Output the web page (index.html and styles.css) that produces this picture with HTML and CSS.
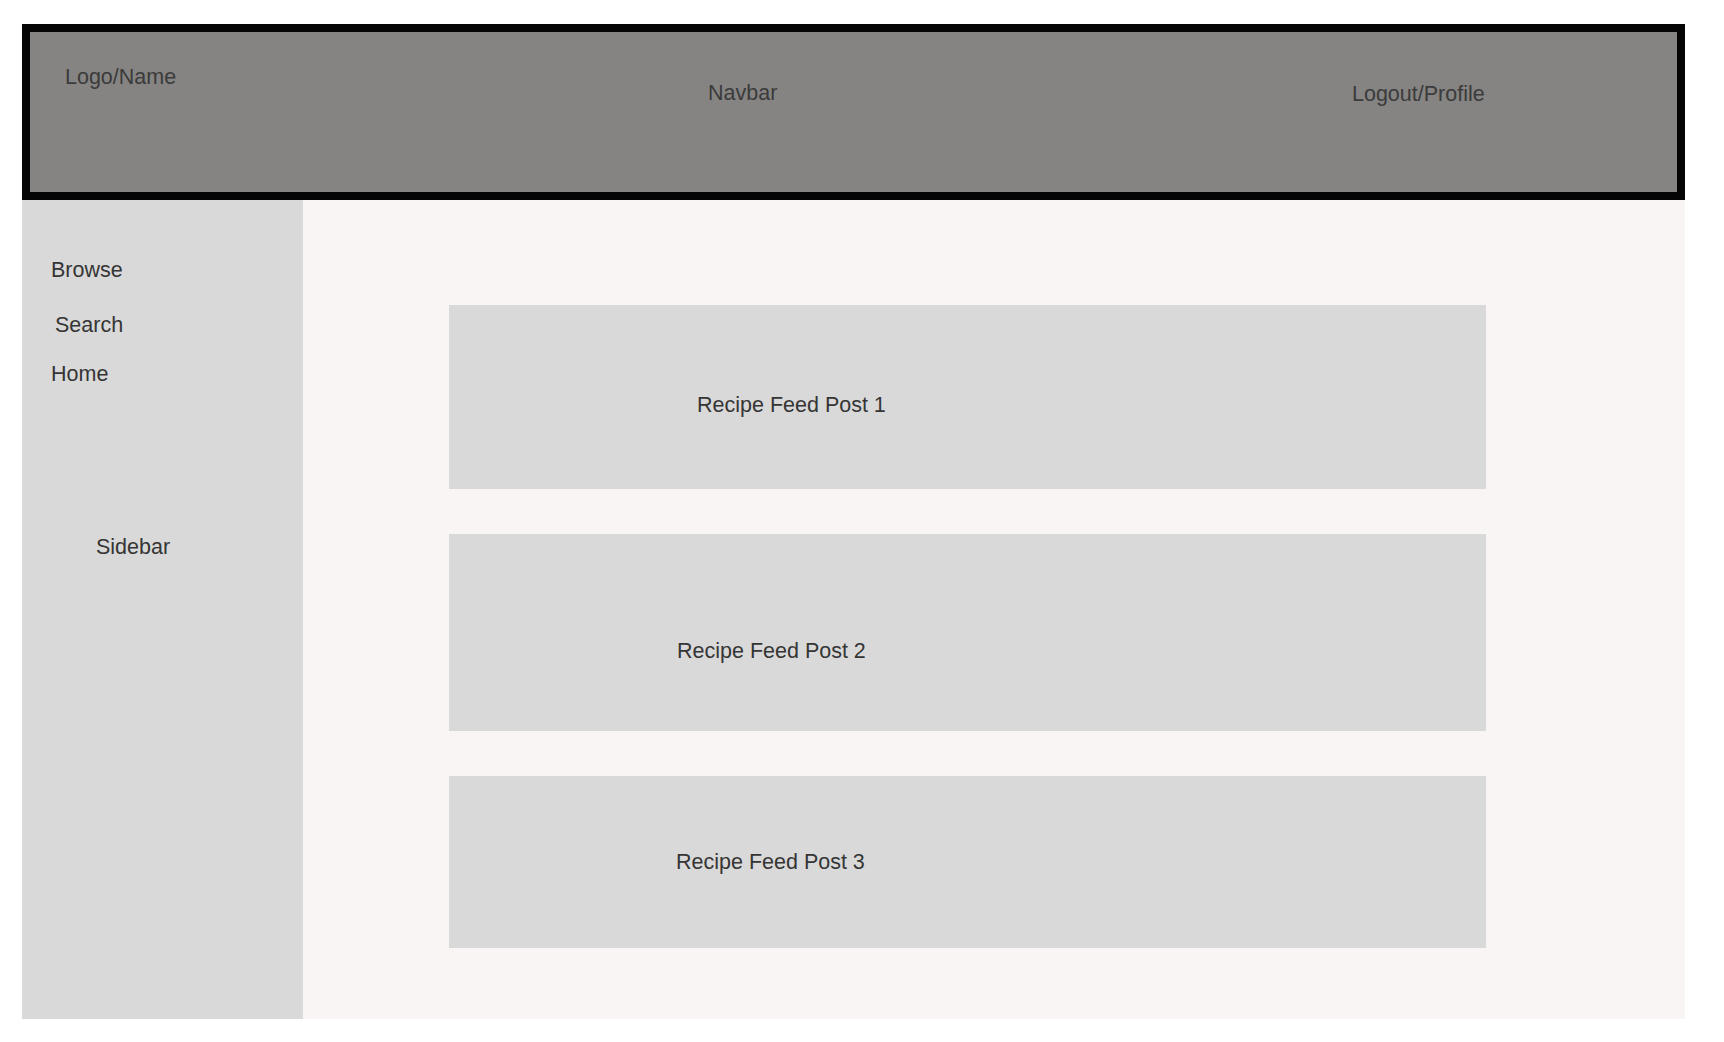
FILE: index.html
```html
<!DOCTYPE html>
<html lang="en">
<head>
<meta charset="utf-8">
<title>Recipe Feed Wireframe</title>
<link rel="stylesheet" href="styles.css">
</head>
<body>
<div class="page">
  <header class="header">
    <div class="logo">Logo/Name</div>
    <div class="navbar">Navbar</div>
    <div class="profile">Logout/Profile</div>
  </header>
  <div class="body">
    <aside class="sidebar">
      <div class="nav-item browse">Browse</div>
      <div class="nav-item search">Search</div>
      <div class="nav-item home">Home</div>
      <div class="nav-item side-label">Sidebar</div>
    </aside>
    <main class="main">
      <div class="post post-1"><span>Recipe Feed Post 1</span></div>
      <div class="post post-2"><span>Recipe Feed Post 2</span></div>
      <div class="post post-3"><span>Recipe Feed Post 3</span></div>
    </main>
  </div>
</div>
</body>
</html>
```
FILE: styles.css
```css
html, body {
  margin: 0;
  padding: 0;
  background: #ffffff;
}

body {
  font-family: "Liberation Sans", Arial, sans-serif;
  font-size: 21.5px;
  line-height: 25px;
  color: #353535;
}

.page {
  padding: 24px 0 0 22px;
  width: 1663px;
}

.header {
  box-sizing: border-box;
  height: 176px;
  border: 8px solid #050505;
  background: #858482;
  color: #3b3b3b;
  display: grid;
  grid-template-columns: 678px 644px 1fr;
  align-items: start;
}

.logo {
  padding: 33px 0 0 35px;
}

.navbar {
  padding-top: 49px;
}

.profile {
  padding-top: 50px;
}

.body {
  display: flex;
  height: 819px;
}

.sidebar {
  width: 281px;
  flex: none;
  background: #d9d9d9;
  display: flex;
  flex-direction: column;
  padding-top: 58px;
  box-sizing: border-box;
}

.nav-item {
  padding-left: 29px;
}

.search {
  margin-top: 30px;
  padding-left: 33px;
}

.home {
  margin-top: 24px;
}

.side-label {
  margin-top: 148px;
  padding-left: 74px;
}

.main {
  flex: 1;
  background: #f9f5f4;
  display: flex;
  flex-direction: column;
  gap: 45px;
  padding: 105px 0 0 146px;
  box-sizing: border-box;
}

.post {
  width: 1037px;
  background: #d9d9d9;
  box-sizing: border-box;
}

.post span {
  display: block;
}

.post-1 {
  height: 184px;
  padding: 88px 0 0 248px;
}

.post-2 {
  height: 197px;
  padding: 105px 0 0 228px;
}

.post-3 {
  height: 172px;
  padding: 74px 0 0 227px;
}
```
